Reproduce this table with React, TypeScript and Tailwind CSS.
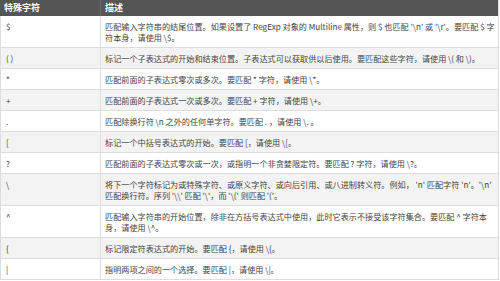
import React from 'react';

const rows: { ch: string; desc: string }[] = [
  { ch: '$', desc: "匹配输入字符串的结尾位置。如果设置了 RegExp 对象的 Multiline 属性，则 $ 也匹配 '\\n' 或 '\\r'。要匹配 $ 字符本身，请使用 \\$。" },
  { ch: '( )', desc: '标记一个子表达式的开始和结束位置。子表达式可以获取供以后使用。要匹配这些字符，请使用 \\( 和 \\)。' },
  { ch: '*', desc: '匹配前面的子表达式零次或多次。要匹配 * 字符，请使用 \\*。' },
  { ch: '+', desc: '匹配前面的子表达式一次或多次。要匹配 + 字符，请使用 \\+。' },
  { ch: '.', desc: '匹配除换行符 \\n 之外的任何单字符。要匹配 . ，请使用 \\. 。' },
  { ch: '[', desc: '标记一个中括号表达式的开始。要匹配 [，请使用 \\[。' },
  { ch: '?', desc: '匹配前面的子表达式零次或一次，或指明一个非贪婪限定符。要匹配 ? 字符，请使用 \\?。' },
  { ch: '\\', desc: "将下一个字符标记为或特殊字符、或原义字符、或向后引用、或八进制转义符。例如， 'n' 匹配字符 'n'。'\\n' 匹配换行符。序列 '\\\\' 匹配 '\\'，而 '\\(' 则匹配 '('。" },
  { ch: '^', desc: '匹配输入字符串的开始位置，除非在方括号表达式中使用，此时它表示不接受该字符集合。要匹配 ^ 字符本身，请使用 \\^。' },
  { ch: '{', desc: '标记限定符表达式的开始。要匹配 {，请使用 \\{。' },
  { ch: '|', desc: '指明两项之间的一个选择。要匹配 |，请使用 \\|。' },
];

export default function App() {
  return (
    <div
      className="w-[500px] h-[281px] overflow-hidden bg-white text-[#444]"
      style={{ fontFamily: '"Noto Sans CJK SC", "Liberation Sans", sans-serif' }}
    >
      <div className="w-[499px] border-r border-[#ddd]">
        {/* header */}
        <div className="grid grid-cols-[101px_1fr] h-[16px] bg-[#555] text-white font-bold text-[9px] leading-[16px]">
          <div className="pl-[4px] border-r border-[#6a6a6a]">特殊字符</div>
          <div className="pl-[4px]">描述</div>
        </div>

        {rows.map((row, i) => (
          <div
            key={i}
            className={`grid grid-cols-[101px_1fr] border-b border-[#ddd] text-[8.15px] leading-[11px] ${
              i % 2 === 1 ? 'bg-[#f3f3f3]' : 'bg-white'
            }`}
          >
            <div className="pl-[5px] pt-[5px] pb-[4px] border-r border-[#ddd] border-l">{row.ch}</div>
            <div className="pl-[4px] pr-[2px] pt-[5px] pb-[4px]">{row.desc}</div>
          </div>
        ))}
      </div>
    </div>
  );
}
